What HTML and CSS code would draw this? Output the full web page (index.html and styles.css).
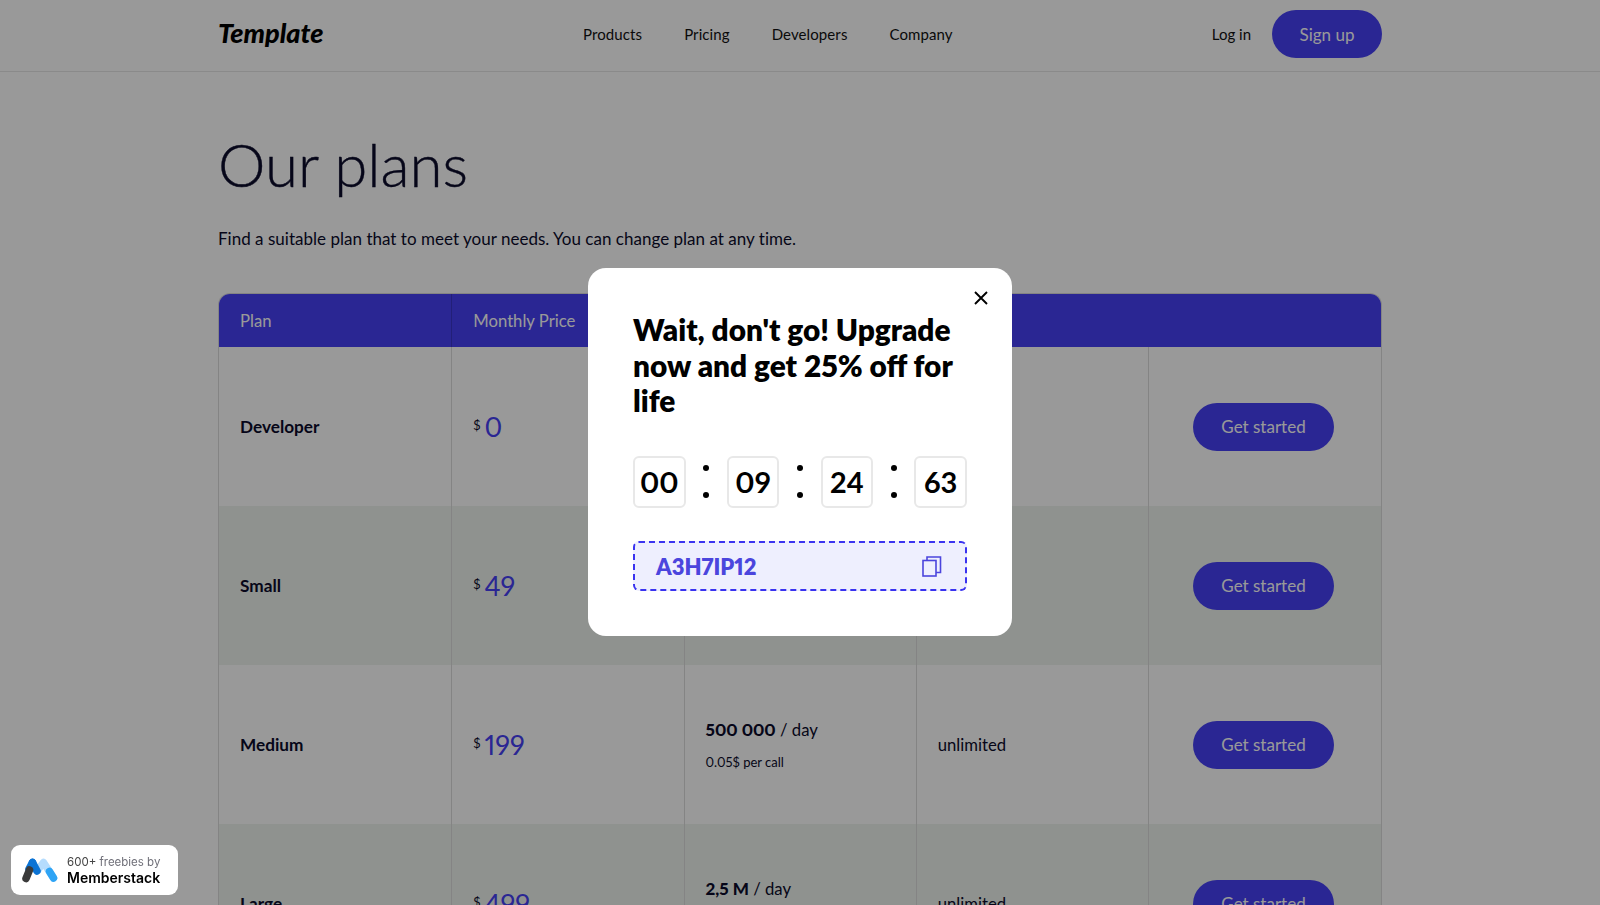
FILE: index.html
```html
<!DOCTYPE html>
<html lang="en">
<head>
<meta charset="utf-8">
<title>Our plans</title>
<link rel="stylesheet" href="styles.css">
</head>
<body>
<header class="nav">
  <div class="nav-inner">
    <a class="logo">Template</a>
    <nav class="nav-links">
      <a>Products</a><a>Pricing</a><a>Developers</a><a>Company</a>
    </nav>
    <div class="nav-actions">
      <a class="login">Log in</a>
      <a class="btn signup">Sign up</a>
    </div>
  </div>
</header>
<main class="content">
  <h1>Our plans</h1>
  <p class="lead">Find a suitable plan that to meet your needs. You can change plan at any time.</p>
  <div class="table">
    <div class="row head">
      <div class="cell">Plan</div>
      <div class="cell">Monthly Price</div>
      <div class="cell">API calls</div>
      <div class="cell">Users</div>
      <div class="cell"></div>
    </div>
    <div class="row">
      <div class="cell name">Developer</div>
      <div class="cell"><span class="cur">$</span><span class="price">0</span></div>
      <div class="cell stack"><div><b>1 000</b> / day</div><small>0.10$ per call</small></div>
      <div class="cell">1 user</div>
      <div class="cell action"><a class="btn">Get started</a></div>
    </div>
    <div class="row alt">
      <div class="cell name">Small</div>
      <div class="cell"><span class="cur">$</span><span class="price">49</span></div>
      <div class="cell stack"><div><b>100 000</b> / day</div><small>0.07$ per call</small></div>
      <div class="cell">5 users</div>
      <div class="cell action"><a class="btn">Get started</a></div>
    </div>
    <div class="row">
      <div class="cell name">Medium</div>
      <div class="cell"><span class="cur">$</span><span class="price">199</span></div>
      <div class="cell stack"><div><b>500 000</b> / day</div><small>0.05$ per call</small></div>
      <div class="cell">unlimited</div>
      <div class="cell action"><a class="btn">Get started</a></div>
    </div>
    <div class="row alt">
      <div class="cell name">Large</div>
      <div class="cell"><span class="cur">$</span><span class="price">499</span></div>
      <div class="cell stack"><div><b>2,5 M</b> / day</div><small>0.03$ per call</small></div>
      <div class="cell">unlimited</div>
      <div class="cell action"><a class="btn">Get started</a></div>
    </div>
  </div>
</main>

<div class="overlay">
  <section class="modal">
    <button class="close" aria-label="Close">
      <svg width="14" height="14" viewBox="0 0 14 14"><path d="M1 1l12 12M13 1L1 13" stroke="#000" stroke-width="1.9" fill="none"/></svg>
    </button>
    <h2>Wait, don't go! Upgrade now and get 25% off for life</h2>
    <div class="timer">
      <div class="digit">00</div><div class="colon"><i></i><i></i></div>
      <div class="digit">09</div><div class="colon"><i></i><i></i></div>
      <div class="digit">24</div><div class="colon"><i></i><i></i></div>
      <div class="digit">63</div>
    </div>
    <div class="code">
      <span>A3H7IP12</span>
      <svg width="20" height="21" viewBox="0 0 20 21" fill="none" stroke="#4b45dd" stroke-width="1.6"><rect x="1" y="4.500" width="13" height="15.500"/><path d="M5 4.500V1h13.500v15.500H14"/></svg>
    </div>
  </section>
</div>

<a class="badge">
  <svg width="36" height="25" viewBox="0 0 36 25" fill="none" stroke-width="7.500" stroke-linecap="round">
    <path d="M15 13L21.500 4.500L31.500 20" stroke="#b5dcfd" stroke-linejoin="round"/>
    <path d="M27.500 13.500L31.500 20" stroke="#2ea4f5"/>
    <path d="M10.500 4.500L15 13" stroke="#0b73d4"/>
    <path d="M10.500 4.500L7 11" stroke="#0b73d4"/>
    <path d="M7.500 12L4 20.500" stroke="#3a3a3a"/>
  </svg>
  <span class="badge-text"><span class="badge-top"><b>600+</b> freebies by</span><strong>Memberstack</strong></span>
</a>
</body>
</html>
```
FILE: styles.css
```css
* { box-sizing: border-box; }
html, body { margin: 0; height: 905px; overflow: hidden; }
body { background: #fff; color: #0b0b2b; font-family: Lato, "Noto Sans", sans-serif; font-size: 16px; font-variant-numeric: proportional-nums; }
a { color: inherit; text-decoration: none; }

.nav { height: 72px; border-bottom: 1px solid #e6e6e6; padding-bottom: 3px; }
.nav-inner { width: 1164px; margin: 0 auto; height: 68px; display: flex; align-items: center; }
.logo { width: 365px; font-weight: 900; font-style: italic; font-size: 27px; color: #000; margin-top: -3px; }
.nav-links { display: flex; gap: 42px; font-size: 15px; letter-spacing: .1px; flex: 1; color: #111; }
.nav-actions { display: flex; align-items: center; gap: 21px; font-size: 15px; color: #111; }
.btn { display: inline-flex; align-items: center; justify-content: center; height: 48px; padding: 0 28px; border-radius: 24px; background: #4640f5; color: #fff; font-size: 17px; }
.signup { width: 110px; padding: 0; }

.content { width: 1164px; margin: 0 auto; }
h1 { margin: 56px 0 0; font-size: 60px; line-height: 72px; font-weight: 300; color: #0b0b2b; -webkit-text-stroke: .4px #0b0b2b; }
.lead { margin: 26px 0 0; font-size: 17px; line-height: 26px; letter-spacing: .02px; color: #0b0b2b; }

.table { margin-top: 41px; border: 1px solid #dcdcdc; border-bottom: 0; border-radius: 12px 12px 0 0; overflow: hidden; }
.row { display: grid; grid-template-columns: repeat(4, 232.250px) 1fr; height: 159px; }
.row.head { height: 53px; background: #4640f5; color: #fff; }
.row.alt { background: #eff4ef; }
.cell { display: flex; align-items: center; padding: 0 21px; border-left: 1px solid #dcdcdc; font-size: 16.700px; }
.cell:first-child { border-left: 0; }
.head .cell { border-left-color: #3a35c8; }
.head .cell:last-child { border-left: 0; }
.row .name { font-weight: 700; font-size: 17.200px; }
.cur { font-size: 13px; margin: -3px 4px 0 0; }
.price { font-size: 27px; color: #4640f5; }
.stack { flex-direction: column; align-items: flex-start; justify-content: center; gap: 14px; }
.stack b { font-weight: 900; font-size: 17px; }
.stack small { font-size: 13px; }
.action { justify-content: center; padding: 0 3px 0 0; }
.action .btn { width: 141px; padding: 0; }

.overlay { position: fixed; inset: 0; background: rgba(0,0,0,.4); display: flex; align-items: center; justify-content: center; padding-bottom: 1px; }
.modal { position: relative; width: 424px; height: 368px; background: #fff; border-radius: 18px; padding: 44px 45px 0; }
.close { position: absolute; top: 23px; right: 24px; width: 14px; height: 14px; padding: 0; border: 0; background: none; display: block; }
.close svg { display: block; }
h2 { margin: 0; font-size: 29.800px; line-height: 35.500px; font-weight: 800; color: #000; }
.timer { display: flex; justify-content: space-between; margin-top: 37px; }
.digit { width: 52.500px; height: 52.500px; border: 2px solid #e8e8e8; border-radius: 6px; display: flex; align-items: center; justify-content: center; font-size: 29px; font-weight: 700; color: #000; }
.colon { width: 41px; display: flex; flex-direction: column; align-items: center; justify-content: space-between; padding: 9px 0 10px; }
.colon i { width: 6px; height: 6px; border-radius: 50%; background: #000; }
.code { margin-top: 33px; height: 50px; border: 2px dashed #3a33f0; border-radius: 6px; background: #eeeffe; display: flex; align-items: center; justify-content: space-between; padding: 0 23px 0 21px; color: #4b45dd; font-size: 22px; font-weight: 800; }

.badge { position: fixed; left: 11px; top: 845px; width: 167px; height: 50px; background: #fff; border-radius: 9px; display: flex; align-items: center; gap: 9px; padding-left: 11px; }
.badge-text { display: flex; flex-direction: column; line-height: 15.500px; font-family: Inter, sans-serif; }
.badge-top { font-size: 11.500px; color: #6f6f78; }
.badge-top b { font-weight: 400; color: #444; }
.badge strong { font-size: 14px; font-weight: 600; color: #000; }
```
